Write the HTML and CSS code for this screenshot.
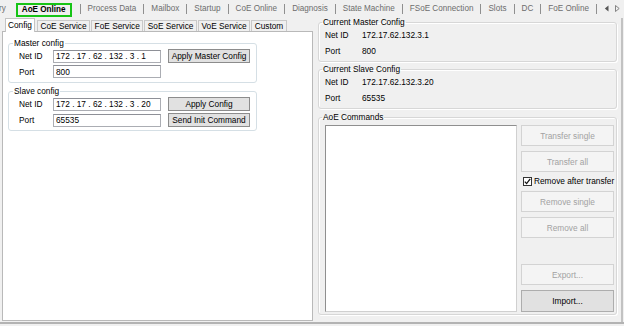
FILE: index.html
```html
<!DOCTYPE html>
<html lang="en">

<head>
    <meta charset="UTF-8">
    <title>AoE Online</title>
    <link rel="stylesheet" href="styles.css">
</head>

<body>
    <div class="window">
        <div class="toptabs">
            <span class="tt">ry</span>
            <span class="tt active">AoE Online</span>
            <i class="sep"></i><span class="tt">Process Data</span>
            <i class="sep"></i><span class="tt">Mailbox</span>
            <i class="sep"></i><span class="tt">Startup</span>
            <i class="sep"></i><span class="tt">CoE Online</span>
            <i class="sep"></i><span class="tt">Diagnosis</span>
            <i class="sep"></i><span class="tt">State Machine</span>
            <i class="sep"></i><span class="tt">FSoE Connection</span>
            <i class="sep"></i><span class="tt">Slots</span>
            <i class="sep"></i><span class="tt">DC</span>
            <i class="sep"></i><span class="tt">FoE Online</span>
            <i class="sep"></i>
            <span class="scroll">
                <svg width="5" height="7" viewBox="0 0 5 7"><path d="M4.5 0.5 L0.8 3.5 L4.5 6.5 Z" fill="#555"/></svg>
                <svg width="5" height="7" viewBox="0 0 5 7"><path d="M0.5 0.5 L4.2 3.5 L0.5 6.5 Z" fill="none" stroke="#777" stroke-width="0.9"/></svg>
            </span>
        </div>

        <div class="content">
            <div class="left">
                <div class="subtabs">
                    <span class="subtab sel">Config</span>
                    <span class="subtab">CoE Service</span>
                    <span class="subtab">FoE Service</span>
                    <span class="subtab">SoE Service</span>
                    <span class="subtab">VoE Service</span>
                    <span class="subtab">Custom</span>
                </div>
                <div class="panel">
                    <fieldset class="group cfg">
                        <legend>Master config</legend>
                        <div class="rows">
                            <div class="row">
                                <label class="lbl">Net ID</label>
                                <input class="txt" type="text" value="172 . 17 . 62 . 132 . 3 . 1">
                                <button class="btn">Apply Master Config</button>
                            </div>
                            <div class="row">
                                <label class="lbl">Port</label>
                                <input class="txt" type="text" value="800">
                            </div>
                        </div>
                    </fieldset>
                    <fieldset class="group cfg slave">
                        <legend>Slave config</legend>
                        <div class="rows">
                            <div class="row">
                                <label class="lbl">Net ID</label>
                                <input class="txt" type="text" value="172 . 17 . 62 . 132 . 3 . 20">
                                <button class="btn">Apply Config</button>
                            </div>
                            <div class="row">
                                <label class="lbl">Port</label>
                                <input class="txt" type="text" value="65535">
                                <button class="btn">Send Init Command</button>
                            </div>
                        </div>
                    </fieldset>
                </div>
            </div>

            <div class="right">
                <fieldset class="group info">
                    <legend>Current Master Config</legend>
                    <div class="rows">
                        <div class="row"><span class="key">Net ID</span><span>172.17.62.132.3.1</span></div>
                        <div class="row"><span class="key">Port</span><span>800</span></div>
                    </div>
                </fieldset>
                <fieldset class="group info">
                    <legend>Current Slave Config</legend>
                    <div class="rows">
                        <div class="row"><span class="key">Net ID</span><span>172.17.62.132.3.20</span></div>
                        <div class="row"><span class="key">Port</span><span>65535</span></div>
                    </div>
                </fieldset>
                <fieldset class="group cmds">
                    <legend>AoE Commands</legend>
                    <div class="cmd-body">
                        <div class="list"></div>
                        <div class="cmd-buttons">
                            <button class="cbtn" disabled>Transfer single</button>
                            <button class="cbtn" disabled>Transfer all</button>
                            <label class="check">
                                <span class="box">
                                    <svg width="7" height="7" viewBox="0 0 7 7"><path d="M0.8 3.6 L2.6 5.6 L6.2 0.9" fill="none" stroke="#111" stroke-width="1.3"/></svg>
                                </span>
                                Remove after transfer
                            </label>
                            <button class="cbtn" disabled>Remove single</button>
                            <button class="cbtn" disabled>Remove all</button>
                            <div class="spacer"></div>
                            <button class="cbtn" disabled>Export...</button>
                            <button class="cbtn on">Import...</button>
                        </div>
                    </div>
                </fieldset>
            </div>
            <div class="edge"></div>
        </div>
        <div class="bottomline"></div>
    </div>
</body>

</html>
```

FILE: styles.css
```css
*,
*::after,
*::before {
    box-sizing: border-box;
}

body {
    margin: 0;
    background: #f0f0f0;
    font-family: "Liberation Sans", Arial, sans-serif;
    font-size: 8.3px;
    color: #000;
}

.window {
    width: 624px;
    height: 326px;
    overflow: hidden;
}

/* outer tab strip */
.toptabs {
    height: 17px;
    display: flex;
    align-items: center;
    gap: 7px;
    margin-left: -1px;
    color: #6d6d6d;
    white-space: nowrap;
    line-height: 10px;
    font-size: 8.15px;
}

.toptabs .active {
    align-self: flex-end;
    height: 14px;
    padding: 0 4px;
    margin-left: 3px;
    margin-right: 1px;
    border: 2px solid #16c416;
    color: #000;
    font-weight: bold;
    display: flex;
    align-items: center;
}

.sep {
    width: 1px;
    height: 10px;
    background: #8f8f8f;
}

.scroll {
    display: flex;
    gap: 6px;
}

.content {
    height: 305px;
    display: flex;
}

/* left side: config tabs */
.left {
    width: 313px;
    display: flex;
    flex-direction: column;
}

.subtabs {
    height: 14px;
    display: flex;
    align-items: flex-end;
    gap: 1px;
    padding-left: 5px;
    position: relative;
    z-index: 1;
}

.subtab {
    height: 11px;
    padding: 0 2.5px;
    line-height: 10px;
    border: 1px solid #c9c9c9;
    border-bottom: none;
    background: #f0f0f0;
}

.subtab.sel {
    height: 14px;
    margin-bottom: -1px;
    margin-right: 1px;
    padding: 1px 2px 0;
    background: #fff;
    border-color: #c4c4c4;
}

.panel {
    margin-left: 2px;
    height: 290px;
    background: #fff;
    border: 1px solid #b9b9b9;
    padding: 6px 0 0 5px;
}

.group {
    margin: 0;
    padding: 0;
    min-inline-size: auto;
}

.group legend {
    padding: 0 1px;
    line-height: 10px;
}

.cfg {
    width: 249px;
    border: 1px solid #d5dfe5;
    border-radius: 3px;
}

.cfg legend {
    margin-left: 4px;
}

.cfg .rows {
    padding: 1px 0 4px 10px;
    display: flex;
    flex-direction: column;
    gap: 2px;
}

.slave {
    margin-top: 3px;
}

.slave .rows {
    padding: 1px 0 3px 10px;
}

.row {
    display: flex;
    align-items: center;
}

.lbl {
    width: 34px;
}

.txt {
    width: 108px;
    height: 13px;
    margin: 0;
    padding: 0 0 0 2px;
    border: 1px solid #abadb3;
    border-top-color: #8e9097;
    font: inherit;
    color: #000;
    background: #fff;
}

.btn {
    width: 82px;
    height: 14px;
    margin: 0 0 0 7px;
    padding: 0;
    border: 1px solid #8c8c8c;
    background: #e1e1e1;
    font: inherit;
    color: #000;
    line-height: 11px;
}

/* right side: current config and commands */
.right {
    width: 299px;
    margin-left: 5px;
    display: flex;
    flex-direction: column;
    padding-bottom: 7px;
}

.info,
.cmds {
    border: 1px solid #d7d7d7;
    border-radius: 3px;
    box-shadow: inset 1px 1px 0 #fff, 1px 1px 0 #fff;
}

.info legend,
.cmds legend {
    margin-left: 3px;
}

.info .rows {
    padding: 1px 0 3px 6px;
    display: flex;
    flex-direction: column;
    gap: 2px;
}

.info .row {
    height: 14px;
}

.info + .info {
    margin-top: 2px;
}

.key {
    width: 37px;
}

.cmds {
    margin-top: 3px;
    flex: 1;
    display: flex;
    flex-direction: column;
}

.cmd-body {
    flex: 1;
    display: flex;
    gap: 4px;
    padding: 3px 2px 2px 6px;
}

.list {
    width: 192px;
    background: #fff;
    border: 1px solid #9a9a9a;
    border-color: #8f8f8f #d0d0d0 #d0d0d0 #8f8f8f;
}

.cmd-buttons {
    width: 93px;
    display: flex;
    flex-direction: column;
    gap: 5px;
}

.cbtn {
    height: 21px;
    margin: 0;
    padding: 0;
    border: 1px solid #d3d3d3;
    background: #f4f4f4;
    font: inherit;
    color: #a2a2a2;
}

.cbtn.on {
    height: 22px;
    border-color: #adadad;
    background: #e1e1e1;
    color: #000;
}

.check {
    height: 9px;
    display: flex;
    align-items: center;
    gap: 2px;
    margin-left: 2px;
    white-space: nowrap;
    line-height: 9px;
}

.box {
    width: 9px;
    height: 9px;
    flex: none;
    border: 1px solid #333;
    background: #fff;
    display: flex;
    align-items: center;
    justify-content: center;
}

.spacer {
    flex: 1;
}

.edge {
    width: 2px;
    margin-left: 4px;
    margin-top: 1px;
    background: #c2c2c2;
}

.bottomline {
    height: 2px;
    background: #b3b3b3;
}
```
